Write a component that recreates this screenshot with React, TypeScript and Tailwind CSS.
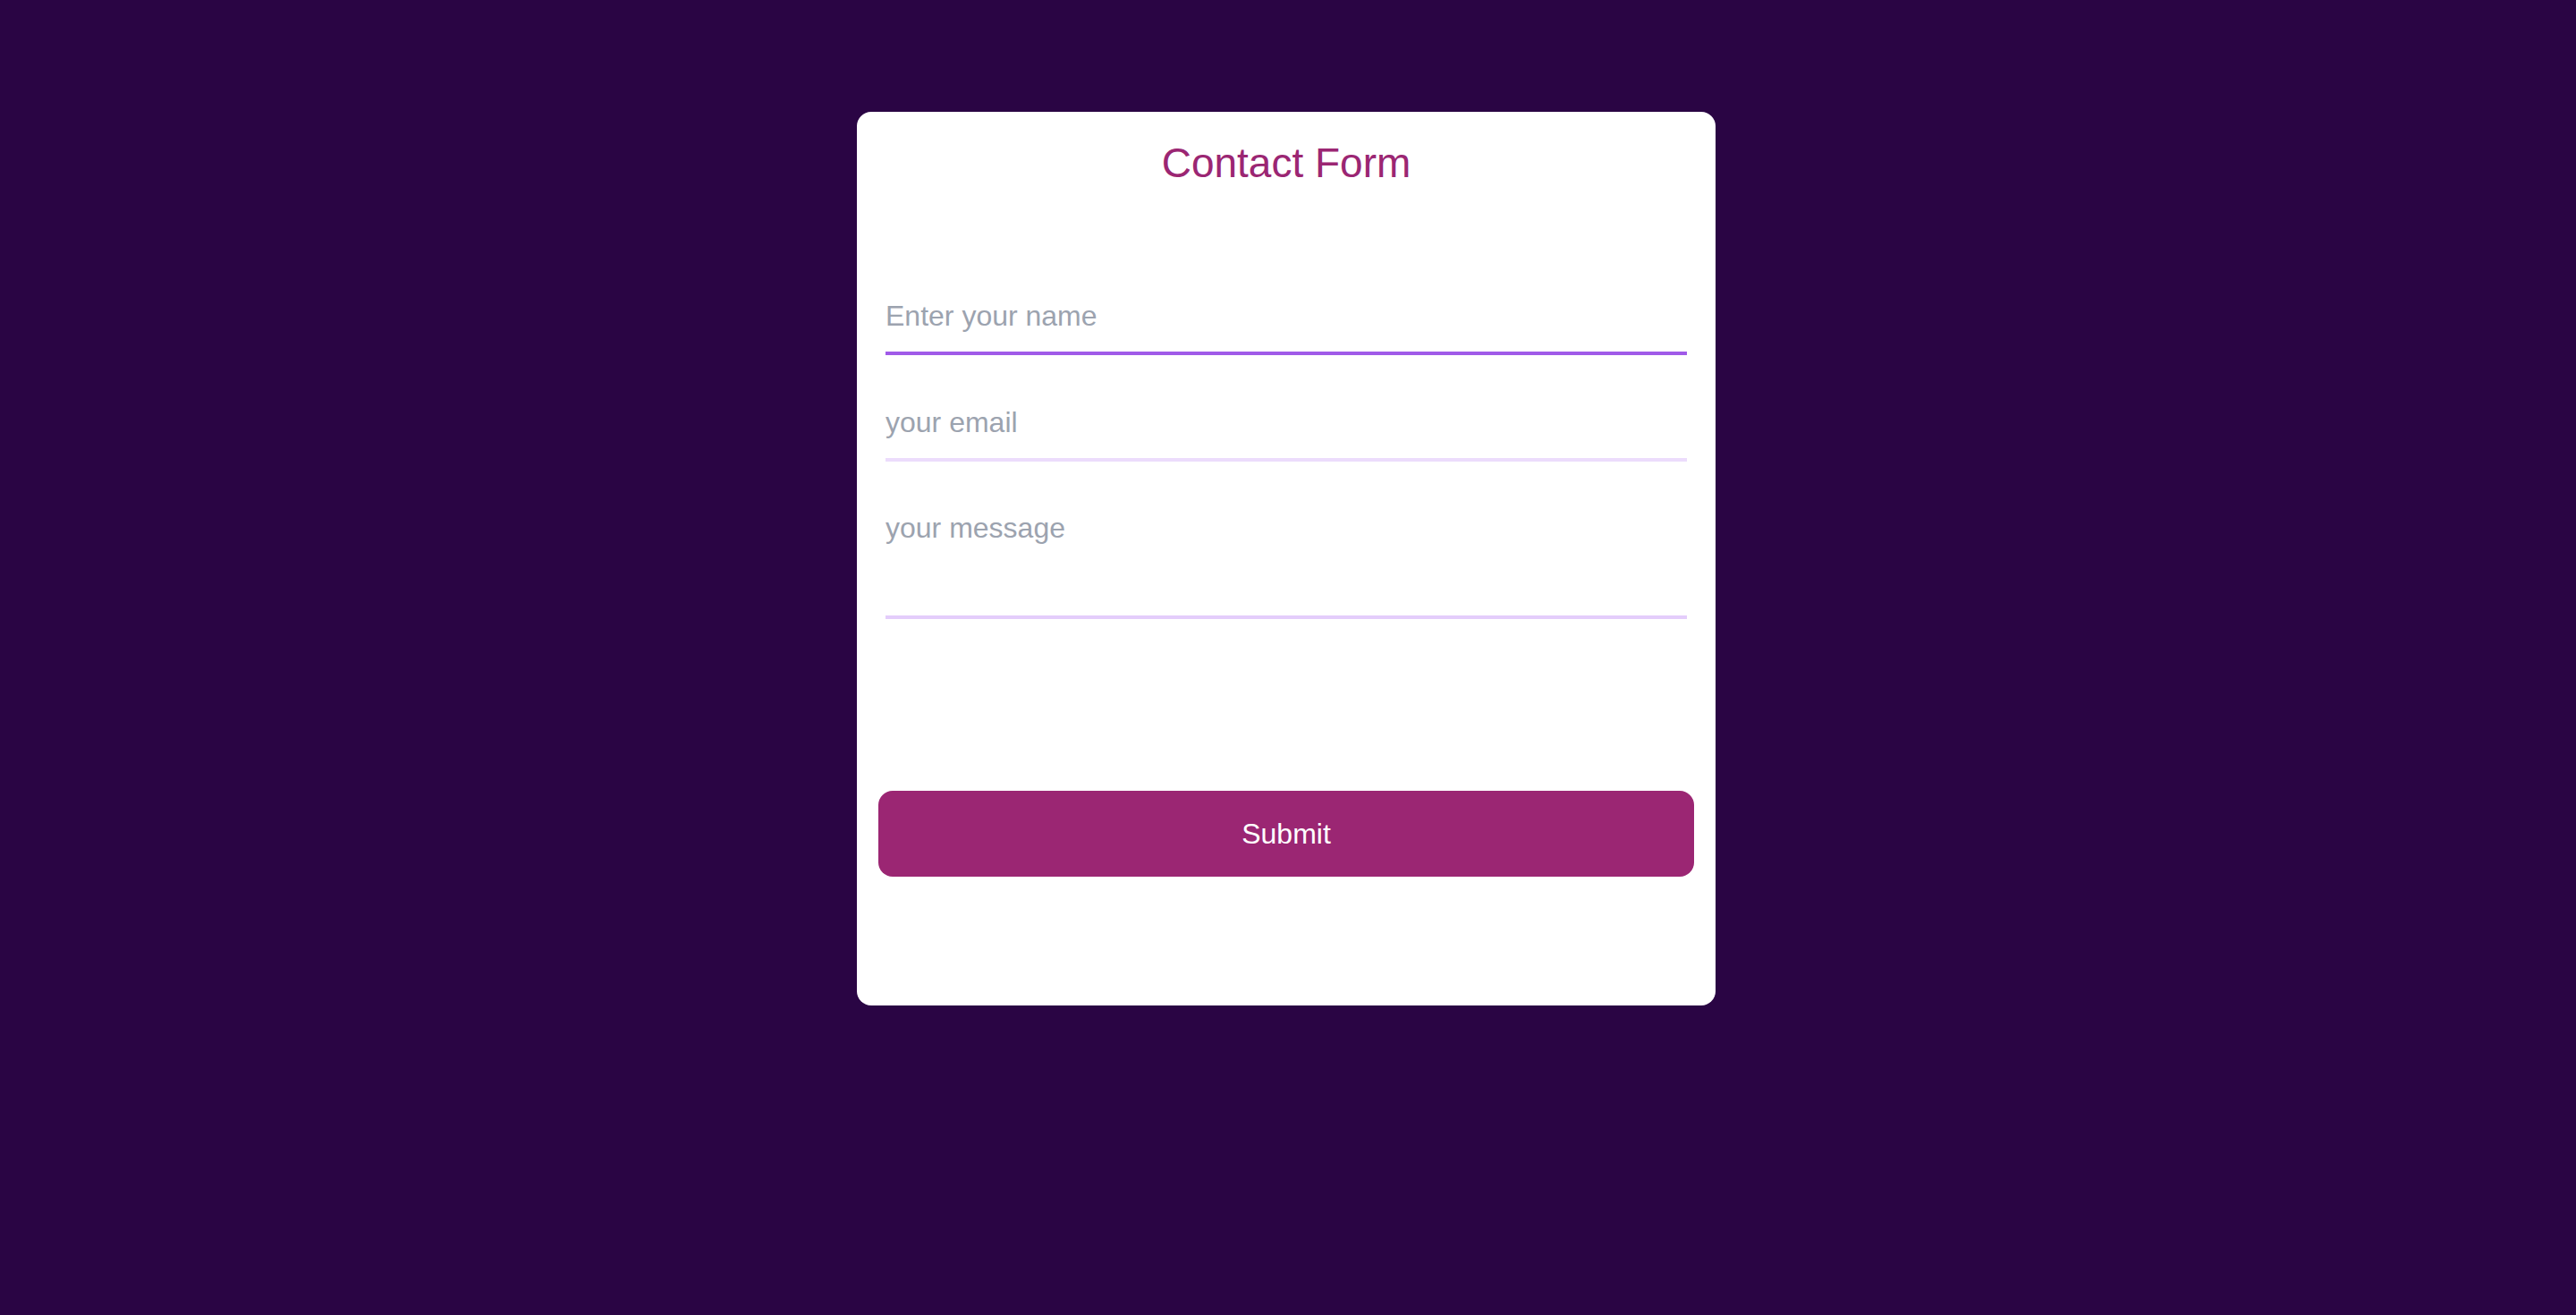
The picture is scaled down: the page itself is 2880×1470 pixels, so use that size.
export default function App() {
  return (
    <div className="min-h-screen w-full bg-[#2a0544] pt-[125px] font-['Liberation_Sans',Arial,sans-serif]">
      {/* Card */}
      <div className="mx-auto w-[960px] -translate-x-[2px] rounded-2xl bg-white pt-[31px] pb-[144px]">
        <h1 className="text-center text-[46px] font-normal leading-[53px] text-[#9b2673]">
          Contact Form
        </h1>

        <form className="mt-[104px] flex flex-col px-[32px]" onSubmit={(e) => e.preventDefault()}>
          <input
            type="text"
            placeholder="Enter your name"
            className="h-[84px] border-b-4 border-[#a05ae8] bg-transparent py-[22px] text-[32px] leading-[36px] text-gray-700 placeholder:text-[#9ca3af] outline-none"
          />
          <input
            type="email"
            placeholder="your email"
            className="mt-[35px] h-[84px] border-b-4 border-[#ecdcfc] bg-transparent py-[22px] text-[32px] leading-[36px] text-gray-700 placeholder:text-[#9ca3af] outline-none"
          />
          <textarea
            placeholder="your message"
            className="mt-[37px] h-[139px] resize-none border-b-4 border-[#e4cdfb] bg-transparent pt-[19px] pb-[22px] text-[32px] leading-[36px] text-gray-700 placeholder:text-[#9ca3af] outline-none"
          />

          <button
            type="submit"
            className="-mx-[8px] mt-[192px] h-[96px] rounded-2xl bg-[#9b2673] text-[32px] text-white"
          >
            Submit
          </button>
        </form>
      </div>
    </div>
  );
}
